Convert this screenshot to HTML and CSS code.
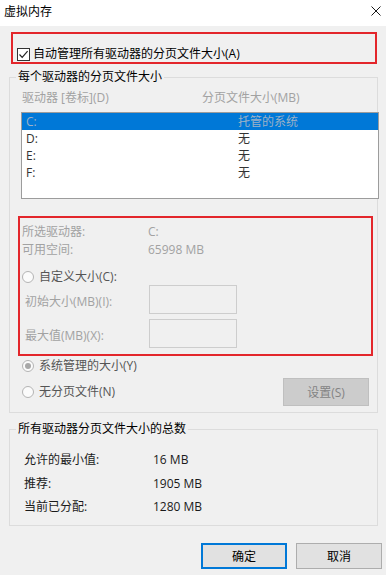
FILE: index.html
```html
<!DOCTYPE html>
<html lang="zh-CN">
<head>
<meta charset="utf-8">
<title>虚拟内存</title>
<link rel="stylesheet" href="styles.css">
</head>
<body>
<div class="dialog">
  <div class="titlebar">
    <span class="title">虚拟内存</span>
    <svg class="close" width="10" height="10" viewBox="0 0 10 10"><path d="M0.5 0.5L9.5 9.5M9.5 0.5L0.5 9.5" stroke="#1a1a1a" stroke-width="1" fill="none"/></svg>
  </div>

  <div class="hl hl-auto">
    <label class="check-row">
      <span class="checkbox"><svg width="11" height="11" viewBox="0 0 11 11"><path d="M1.5 5.5L4.2 8.3L9.6 2.2" stroke="#222" stroke-width="1.2" fill="none"/></svg></span>
      <span>自动管理所有驱动器的分页文件大小(A)</span>
    </label>
  </div>

  <fieldset class="group group-drives">
    <legend>每个驱动器的分页文件大小</legend>
    <div class="cols dim">
      <span class="col1">驱动器 [卷标](D)</span>
      <span>分页文件大小(MB)</span>
    </div>
    <div class="listbox">
      <div class="row selected"><span>C:</span><span>托管的系统</span></div>
      <div class="row"><span>D:</span><span>无</span></div>
      <div class="row"><span>E:</span><span>无</span></div>
      <div class="row"><span>F:</span><span>无</span></div>
    </div>

    <div class="hl hl-custom">
      <div class="info dim"><span class="info-label">所选驱动器:</span><span>C:</span></div>
      <div class="info dim"><span class="info-label">可用空间:</span><span>65998 MB</span></div>
      <div class="radio-row first-radio"><span class="radio"></span><span class="radio-label">自定义大小(C):</span></div>
      <div class="input-row"><span class="input-label dim">初始大小(MB)(I):</span><span class="input"></span></div>
      <div class="input-row second"><span class="input-label dim">最大值(MB)(X):</span><span class="input"></span></div>
    </div>

    <div class="radio-row sys-radio"><span class="radio checked"></span><span class="radio-label">系统管理的大小(Y)</span></div>
    <div class="set-row">
      <div class="radio-row"><span class="radio"></span><span class="radio-label">无分页文件(N)</span></div>
      <span class="btn btn-disabled">设置(S)</span>
    </div>
  </fieldset>

  <fieldset class="group group-total">
    <legend>所有驱动器分页文件大小的总数</legend>
    <div class="totals">
      <div class="total-row"><span class="total-label">允许的最小值:</span><span>16 MB</span></div>
      <div class="total-row"><span class="total-label">推荐:</span><span>1905 MB</span></div>
      <div class="total-row"><span class="total-label">当前已分配:</span><span>1280 MB</span></div>
    </div>
  </fieldset>

  <div class="actions">
    <span class="btn btn-default">确定</span>
    <span class="btn">取消</span>
  </div>
</div>
</body>
</html>
```

FILE: styles.css
```css
* { box-sizing: border-box; }

html, body {
  margin: 0;
  padding: 0;
}

body {
  width: 386px;
  height: 575px;
  overflow: hidden;
  background: #f0f0f0;
  font-family: "Open Sans", "Noto Sans CJK SC", sans-serif;
  font-size: 12px;
  color: #000;
}

.dialog {
  width: 386px;
  height: 575px;
}

.titlebar {
  height: 26px;
  background: #fff;
  display: flex;
  align-items: center;
  justify-content: space-between;
  padding: 0 5px 2px 4px;
}

.title {
  line-height: 16px;
  color: #000;
}

.close {
  display: block;
  margin-top: -2px;
}

.hl {
  border: 2px solid #e3262b;
}

.hl-auto {
  margin: 6px 9px 0 11px;
  height: 32px;
  padding: 12px 0 0 4px;
}

.check-row {
  display: flex;
  align-items: center;
  line-height: 16px;
  gap: 3px;
}

.checkbox {
  width: 13px;
  height: 13px;
  border: 1px solid #333;
  background: #fff;
  display: flex;
  align-items: center;
  justify-content: center;
}

.checkbox svg { display: block; }

.group {
  margin: 0 0 0 9px;
  width: 369px;
  padding: 0;
  border: 1px solid #dcdcdc;
  min-width: 0;
}

.group legend {
  margin-left: 6px;
  padding: 0 2px;
  line-height: 16px;
  color: #000;
}

.group-drives {
  margin-top: 5px;
  padding-bottom: 6px;
}

.dim { color: #a2a2a2; }

.cols {
  display: flex;
  line-height: 16px;
  margin-top: 5px;
  padding-left: 12px;
}

.col1 { width: 180px; }

.listbox {
  margin: 6px 0 0 11px;
  width: 358px;
  height: 87px;
  border: 1px solid #9c9c9c;
  background: #fff;
}

.row {
  display: flex;
  height: 17px;
  line-height: 17px;
  padding-left: 4px;
  color: #333;
}

.row span:first-child { width: 212px; }

.row.selected {
  background: #0078d7;
  color: #9db1c6;
}

.hl-custom {
  margin: 17px 0 0 8px;
  width: 355px;
  height: 140px;
  padding: 5px 0 0 0;
}

.info {
  display: flex;
  line-height: 18px;
  padding-left: 2px;
}

.info-label { width: 126px; }

.radio-row {
  display: flex;
  align-items: center;
  line-height: 16px;
  gap: 5px;
}

.first-radio {
  margin-top: 10px;
  padding-left: 2px;
}

.radio {
  width: 12px;
  height: 12px;
  border-radius: 50%;
  border: 1px solid #b4b4b4;
  background: #fbfbfb;
  display: flex;
  align-items: center;
  justify-content: center;
}

.radio.checked::after {
  content: "";
  width: 6px;
  height: 6px;
  border-radius: 50%;
  background: #a8a8a8;
}

.radio-label { color: #555; }

.input-row {
  display: flex;
  align-items: center;
  padding-left: 5px;
}

.input-row.second { margin-top: 5px; }

.input-label {
  width: 124px;
  padding-top: 3px;
}

.input {
  width: 88px;
  height: 29px;
  border: 1px solid #cdcdcd;
  background: #f0f0f0;
}

.sys-radio {
  margin: 2px 0 0 12px;
}

.set-row {
  display: flex;
  align-items: center;
  justify-content: space-between;
  margin: 4px 8px 0 12px;
}

.btn {
  width: 86px;
  height: 26px;
  display: flex;
  align-items: center;
  justify-content: center;
  background: #e1e1e1;
  border: 1px solid #adadad;
  color: #000;
}

.btn-disabled {
  height: 28px;
  background: #cccccc;
  border-color: #bfbfbf;
  color: #838383;
}

.btn-default {
  border: 2px solid #0078d7;
}

.group-total {
  margin-top: 8px;
  padding-bottom: 6px;
}

.totals {
  padding: 11px 0 0 14px;
}

.total-row {
  display: flex;
  line-height: 23.5px;
  color: #1a1a1a;
}

.total-label { width: 129px; }

.actions {
  display: flex;
  justify-content: flex-end;
  gap: 9px;
  margin-top: 17px;
  padding-right: 4px;
}
```
